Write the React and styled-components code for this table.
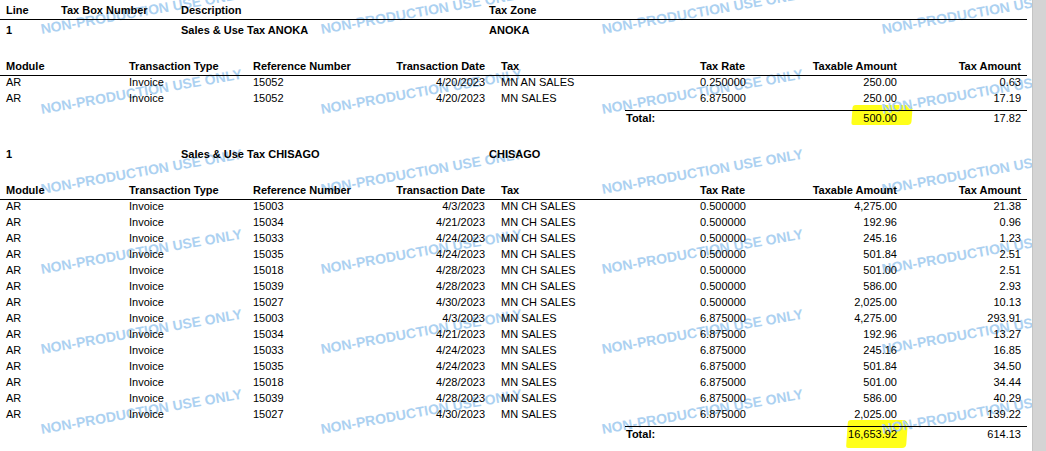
import styled, { createGlobalStyle } from 'styled-components'

const GlobalStyle = createGlobalStyle`
  html, body {
    margin: 0;
    padding: 0;
    background: #d4d4d4;
    overflow: hidden;
  }
  body {
    font-family: 'Liberation Sans', Arial, sans-serif;
    font-size: 11px;
    color: #000;
  }
`

const Viewer = styled.div`
  display: flex;
  height: 100vh;
`

const Sheet = styled.div`
  position: relative;
  z-index: 0;
  width: 1032px;
  flex: none;
  background: #fff;
  overflow: hidden;
`

const Gutter = styled.div`
  flex: 1;
  background: #d4d4d4;
  border-left: 1px solid #c4c4c4;
`

const Content = styled.div`
  width: 1027px;
`

const PageHeader = styled.div`
  display: grid;
  grid-template-columns: 55px 120px 308px 1fr;
  padding: 2px 6px 1px;
  line-height: 16px;
  font-weight: bold;
  border-bottom: 1px solid #000;
`

const Group = styled.section`
  margin-top: ${(p) => (p.$first ? '2px' : '21px')};
`

const ZoneRow = styled.div`
  display: grid;
  grid-template-columns: 55px 120px 308px 1fr;
  padding: 0 6px;
  line-height: 16px;
  font-weight: bold;
`

const cols = '123px 124px 132px 100px 215px 97px 100px 124px'

const HeadRow = styled.div`
  display: grid;
  grid-template-columns: ${cols};
  margin-top: 20px;
  padding: 0 6px 1px;
  line-height: 16px;
  font-weight: bold;
  border-bottom: 1px solid #000;
`

const Row = styled.div`
  display: grid;
  grid-template-columns: ${cols};
  padding: 0 6px 4px;
  line-height: 12px;
  white-space: nowrap;
`

const Cell = styled.div`
  text-align: ${(p) => (p.$right ? 'right' : 'left')};
  padding-left: ${(p) => (p.$gap ? '16px' : '0')};
`

const TotalRow = styled.div`
  display: grid;
  grid-template-columns: 171px 100px 124px;
  margin: 2px 0 0 625px;
  padding: 0 6px 0 1px;
  line-height: 14px;
  border-top: 1px solid #000;
`

const TotalLabel = styled.div`
  font-weight: bold;
`

const Amount = styled.div`
  position: relative;
  text-align: right;
`

const Highlight = styled.span`
  position: absolute;
  z-index: -1;
  top: ${(p) => p.$top}px;
  right: ${(p) => p.$right}px;
  width: ${(p) => p.$w}px;
  height: ${(p) => p.$h}px;
  background: #ffff1a;
  border-radius: 3px 5px 4px 2px;
  transform: skewX(-4deg);
`

const Watermarks = styled.div`
  position: absolute;
  inset: 0;
  z-index: -1;
  pointer-events: none;
`

const Mark = styled.span`
  position: absolute;
  left: ${(p) => p.$x}px;
  top: ${(p) => p.$y - 14}px;
  font: bold 14px 'Liberation Sans', Arial, sans-serif;
  line-height: 14px;
  color: #acd1f1;
  white-space: nowrap;
  transform: rotate(-10deg);
  transform-origin: left bottom;
`

const groups = [
  {
    zone: 'ANOKA',
    rows: [
      ['15052', '4/20/2023', 'MN AN SALES', '0.250000', '250.00', '0.63'],
      ['15052', '4/20/2023', 'MN SALES', '6.875000', '250.00', '17.19'],
    ],
    taxable: '500.00',
    tax: '17.82',
    hl: { top: -6, right: -15, w: 60, h: 20 },
  },
  {
    zone: 'CHISAGO',
    rows: [
      ['15003', '4/3/2023', 'MN CH SALES', '0.500000', '4,275.00', '21.38'],
      ['15034', '4/21/2023', 'MN CH SALES', '0.500000', '192.96', '0.96'],
      ['15033', '4/24/2023', 'MN CH SALES', '0.500000', '245.16', '1.23'],
      ['15035', '4/24/2023', 'MN CH SALES', '0.500000', '501.84', '2.51'],
      ['15018', '4/28/2023', 'MN CH SALES', '0.500000', '501.00', '2.51'],
      ['15039', '4/28/2023', 'MN CH SALES', '0.500000', '586.00', '2.93'],
      ['15027', '4/30/2023', 'MN CH SALES', '0.500000', '2,025.00', '10.13'],
      ['15003', '4/3/2023', 'MN SALES', '6.875000', '4,275.00', '293.91'],
      ['15034', '4/21/2023', 'MN SALES', '6.875000', '192.96', '13.27'],
      ['15033', '4/24/2023', 'MN SALES', '6.875000', '245.16', '16.85'],
      ['15035', '4/24/2023', 'MN SALES', '6.875000', '501.84', '34.50'],
      ['15018', '4/28/2023', 'MN SALES', '6.875000', '501.00', '34.44'],
      ['15039', '4/28/2023', 'MN SALES', '6.875000', '586.00', '40.29'],
      ['15027', '4/30/2023', 'MN SALES', '6.875000', '2,025.00', '139.22'],
    ],
    taxable: '16,653.92',
    tax: '614.13',
    hl: { top: -7, right: -10, w: 60, h: 28 },
  },
]

const markCols = [42, 322, 603, 883]
const markRows = [36, 116, 196, 276, 356, 436]

const App = () => (
  <Viewer>
    <GlobalStyle />
    <Sheet>
      <Content>
        <PageHeader>
          <div>Line</div>
          <div>Tax Box Number</div>
          <div>Description</div>
          <div>Tax Zone</div>
        </PageHeader>
        {groups.map((g, i) => (
          <Group key={g.zone} $first={i === 0}>
            <ZoneRow>
              <div>1</div>
              <div />
              <div>Sales &amp; Use Tax {g.zone}</div>
              <div>{g.zone}</div>
            </ZoneRow>
            <HeadRow>
              <Cell>Module</Cell>
              <Cell>Transaction Type</Cell>
              <Cell>Reference Number</Cell>
              <Cell $right>Transaction Date</Cell>
              <Cell $gap>Tax</Cell>
              <Cell>Tax Rate</Cell>
              <Cell $right>Taxable Amount</Cell>
              <Cell $right>Tax Amount</Cell>
            </HeadRow>
            {g.rows.map((r, j) => (
              <Row key={j}>
                <Cell>AR</Cell>
                <Cell>Invoice</Cell>
                <Cell>{r[0]}</Cell>
                <Cell $right>{r[1]}</Cell>
                <Cell $gap>{r[2]}</Cell>
                <Cell>{r[3]}</Cell>
                <Cell $right>{r[4]}</Cell>
                <Cell $right>{r[5]}</Cell>
              </Row>
            ))}
            <TotalRow>
              <TotalLabel>Total:</TotalLabel>
              <Amount>
                <Highlight $top={g.hl.top} $right={g.hl.right} $w={g.hl.w} $h={g.hl.h} />
                {g.taxable}
              </Amount>
              <Amount>{g.tax}</Amount>
            </TotalRow>
          </Group>
        ))}
      </Content>
      <Watermarks>
        {markRows.map((y) =>
          markCols.map((x) => (
            <Mark key={`${x}-${y}`} $x={x} $y={y}>
              NON-PRODUCTION USE ONLY
            </Mark>
          ))
        )}
      </Watermarks>
    </Sheet>
    <Gutter />
  </Viewer>
)

export default App
